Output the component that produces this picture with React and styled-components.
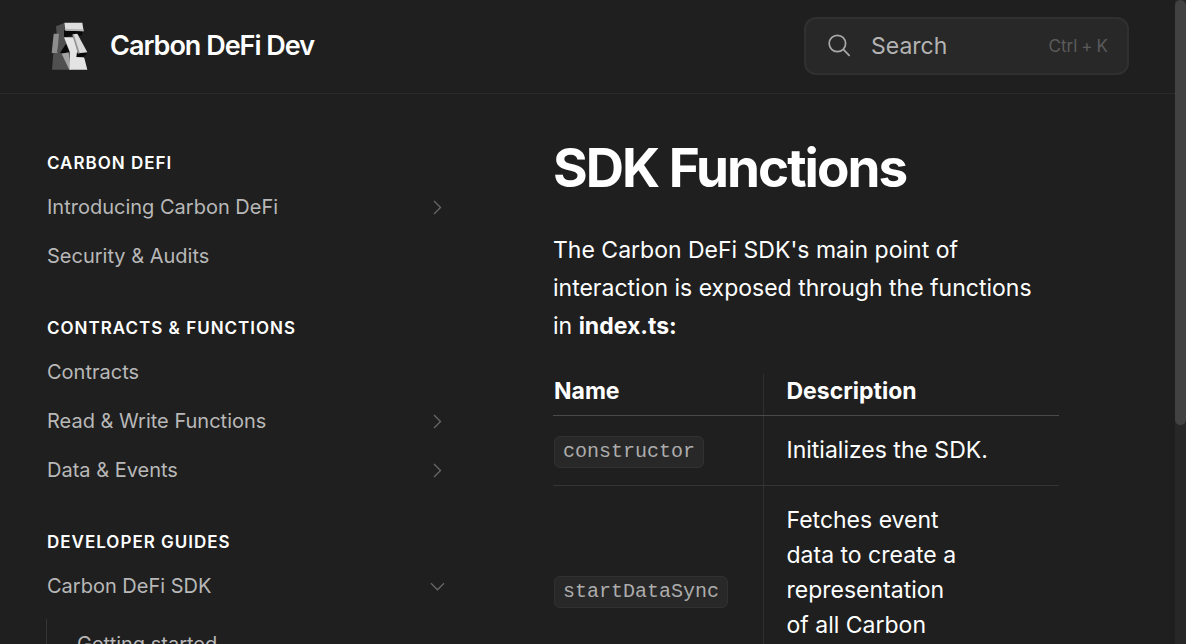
import React from "react";
import styled, { createGlobalStyle } from "styled-components";

const GlobalStyle = createGlobalStyle`
  *, *::before, *::after { box-sizing: border-box; }
  body {
    margin: 0;
    background: #1f1f1f;
    color: #fff;
    font-family: Inter, "Liberation Sans", sans-serif;
    overflow: hidden;
  }
`;

const Viewport = styled.div`
  display: flex;
  height: 100vh;
`;

const Page = styled.div`
  flex: 1;
  min-width: 0;
  overflow: hidden;
`;

const ScrollTrack = styled.div`
  flex: none;
  width: 11px;
  background: #272727;
`;

const ScrollThumb = styled.div`
  height: 66%;
  border-radius: 6px;
  background: #424242;
`;

const Header = styled.header`
  display: flex;
  align-items: center;
  justify-content: space-between;
  height: 94px;
  padding: 0 46px 2px 47px;
  border-bottom: 1px solid #2a2a2a;
`;

const Brand = styled.a`
  display: flex;
  align-items: center;
  gap: 19px;
  color: #fff;
  font-size: 27px;
  font-weight: 600;
  line-height: 32px;
  letter-spacing: -1px;
  text-decoration: none;
`;

const SearchButton = styled.button`
  display: flex;
  align-items: center;
  gap: 20px;
  width: 325px;
  height: 58px;
  padding: 0 19px 0 22px;
  border: 2px solid #303030;
  border-radius: 12px;
  background: #282828;
  color: #b3b3b3;
  font: 400 23px/32px Inter, "Liberation Sans", sans-serif;
  text-align: left;
`;

const SearchLabel = styled.span`
  flex: 1;
`;

const Shortcut = styled.span`
  display: flex;
  gap: 4px;
  color: #5b5b5b;
  font-size: 17px;
`;

const Columns = styled.div`
  display: flex;
  gap: 93px;
  padding: 0 116px 0 32px;
`;

const Sidebar = styled.nav`
  flex: none;
  width: 428px;
  padding-top: 52px;
`;

const Section = styled.section`
  margin-bottom: 31px;
`;

const SectionTitle = styled.h2`
  margin: 0;
  padding: 5px 15px 7px;
  font-size: 17px;
  font-weight: 600;
  line-height: 24px;
  letter-spacing: 1px;
  text-transform: uppercase;
`;

const NavList = styled.ul`
  margin: 0;
  padding: 0;
  list-style: none;
`;

const SubList = styled(NavList)`
  margin: 9px 0 0 14px;
  padding-left: 15px;
  border-left: 1px solid #353535;
`;

const NavLink = styled.a`
  display: flex;
  align-items: center;
  justify-content: space-between;
  padding: 11px 15px 10px;
  color: #b8b8b8;
  font-size: 20px;
  line-height: 28px;
  text-decoration: none;
`;

const Main = styled.main`
  flex: 1;
  min-width: 0;
  padding-top: 42px;
`;

const Title = styled.h1`
  margin: 0 0 31px;
  font-size: 53px;
  font-weight: 700;
  line-height: 64px;
  letter-spacing: -2px;
`;

const Intro = styled.p`
  margin: 0;
  padding-right: 16px;
  font-size: 23px;
  line-height: 38px;
`;

const Table = styled.table`
  width: 100%;
  margin-top: 29px;
  border-collapse: collapse;
  font-size: 23px;
  line-height: 35px;
  text-align: left;
`;

const HeadCell = styled.th`
  padding: 0 1px 6px;
  border-bottom: 1px solid #4a4a4a;
  font-weight: 700;

  & + & {
    padding-left: 23px;
    border-left: 1px solid #303030;
  }
`;

const Cell = styled.td`
  padding: 17px 1px;
  border-bottom: 1px solid #353535;

  & + & {
    padding-left: 23px;
    padding-right: 66px;
    border-left: 1px solid #303030;
  }
`;

const NameColumn = styled.col`
  width: 210px;
`;

const Code = styled.code`
  display: inline-block;
  padding: 2px 8px;
  border: 1px solid #313131;
  border-radius: 6px;
  background: #282828;
  color: #acacac;
  font: 20px/26px "Liberation Mono", monospace;
  vertical-align: middle;
`;

const Logo = () => (
  <svg width="44" height="48" viewBox="9 20 132 142" aria-hidden="true">
    <path fill="#505050" d="M36 32 61 22 64 60 72 100 80 162H24L28 112 42 108Z" />
    <path fill="#080808" d="M60 44 118 46 112 60 90 56 60 66Z" />
    <path fill="#080808" d="M66 84 78 113 48 112Z" />
    <path fill="#dedede" d="M61 21H115L119 47 64 44Z" />
    <path fill="#b5b5b5" d="M62 39 118 41 119 47 64 45Z" />
    <path fill="#8d8d8d" d="M29 54 45 54 40 112H23Z" />
    <path fill="#a4a4a4" d="M53 114 74 110 80 162 76 162Z" />
    <path fill="#e4e4e4" d="M60 65H88L104 112 121 127 130 162H77V108Z" />
    <path fill="#080808" d="M99 110 130 112 118 125 97 124Z" />
    <path fill="#dadada" d="M86 56 100 54 130 110 104 113Z" />
    <path fill="#969696" d="M85 58 89 56 107 111 102 115Z" />
  </svg>
);

const SearchIcon = () => (
  <svg width="23" height="24" viewBox="0 0 23 24" fill="none" stroke="#a9a9a9" strokeWidth="1.7" aria-hidden="true">
    <circle cx="9.4" cy="9.5" r="8.2" />
    <path d="M15.3 15.4 21.6 21.8" />
  </svg>
);

const Chevron = ({ open }) => (
  <svg width="15" height="15" viewBox="0 0 15 15" fill="none" stroke="#686868" strokeWidth="1.3" aria-hidden="true">
    <path d={open ? "M1 4.3 7.5 10.8 14 4.3" : "M4 1 10.5 7.5 4 14"} />
  </svg>
);

const sections = [
  {
    title: "Carbon DeFi",
    items: [{ label: "Introducing Carbon DeFi", group: true }, { label: "Security & Audits" }],
  },
  {
    title: "Contracts & Functions",
    items: [
      { label: "Contracts" },
      { label: "Read & Write Functions", group: true },
      { label: "Data & Events", group: true },
    ],
  },
  {
    title: "Developer Guides",
    items: [{ label: "Carbon DeFi SDK", group: true, children: ["Getting started"] }],
  },
];

const functions = [
  { name: "constructor", description: "Initializes the SDK." },
  {
    name: "startDataSync",
    description: "Fetches event data\u00a0to create a representation of\u00a0all Carbon strategies.",
  },
];

export default function App() {
  return (
    <Viewport>
      <GlobalStyle />
      <Page>
        <Header>
          <Brand href="#">
            <Logo />
            Carbon DeFi Dev
          </Brand>
          <SearchButton type="button">
            <SearchIcon />
            <SearchLabel>Search</SearchLabel>
            <Shortcut>
              <span>Ctrl</span>
              <span>+</span>
              <span>K</span>
            </Shortcut>
          </SearchButton>
        </Header>
        <Columns>
          <Sidebar aria-label="Documentation">
            {sections.map((section) => (
              <Section key={section.title}>
                <SectionTitle>{section.title}</SectionTitle>
                <NavList>
                  {section.items.map((item) => (
                    <li key={item.label}>
                      <NavLink href="#">
                        {item.label}
                        {item.group && <Chevron open={Boolean(item.children)} />}
                      </NavLink>
                      {item.children && (
                        <SubList>
                          {item.children.map((child) => (
                            <li key={child}>
                              <NavLink href="#">{child}</NavLink>
                            </li>
                          ))}
                        </SubList>
                      )}
                    </li>
                  ))}
                </NavList>
              </Section>
            ))}
          </Sidebar>
          <Main>
            <Title>SDK Functions</Title>
            <Intro>
              The Carbon DeFi SDK's main point of interaction is exposed through the functions in{" "}
              <strong>index.ts:</strong>
            </Intro>
            <Table>
              <colgroup>
                <NameColumn />
                <col />
              </colgroup>
              <thead>
                <tr>
                  <HeadCell scope="col">Name</HeadCell>
                  <HeadCell scope="col">Description</HeadCell>
                </tr>
              </thead>
              <tbody>
                {functions.map((fn) => (
                  <tr key={fn.name}>
                    <Cell>
                      <Code>{fn.name}</Code>
                    </Cell>
                    <Cell>{fn.description}</Cell>
                  </tr>
                ))}
              </tbody>
            </Table>
          </Main>
        </Columns>
      </Page>
      <ScrollTrack aria-hidden="true">
        <ScrollThumb />
      </ScrollTrack>
    </Viewport>
  );
}
